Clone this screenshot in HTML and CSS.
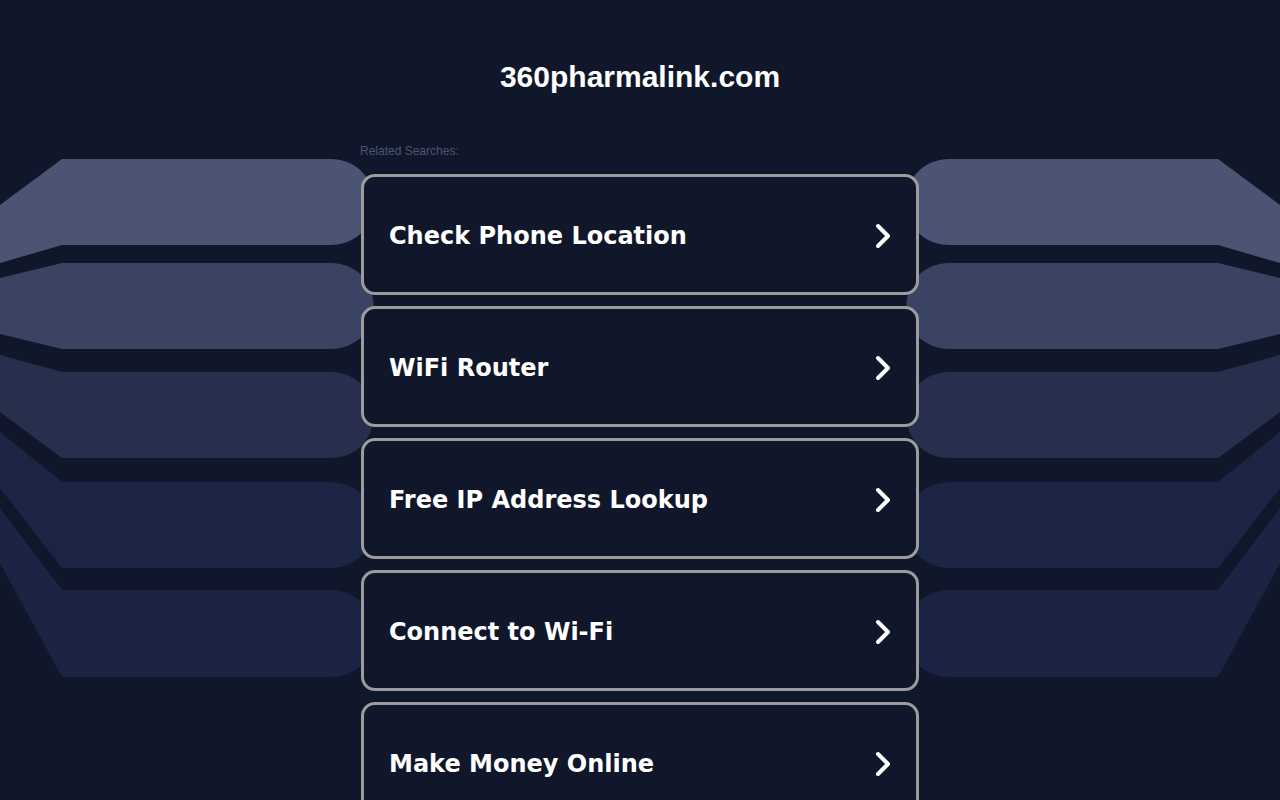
FILE: index.html
```html
<!DOCTYPE html>
<html lang="en">
<head>
<meta charset="utf-8">
<title>360pharmalink.com</title>
<link rel="stylesheet" href="styles.css">
</head>
<body>
<svg class="backdrop" viewBox="0 0 1280 800" width="1280" height="800" aria-hidden="true">
  <defs>
    <pattern id="dots" width="4" height="4" patternUnits="userSpaceOnUse">
      <rect x="1" y="1" width="1" height="1" fill="#232d52"/>
      <rect x="3" y="3" width="1" height="1" fill="#1a2140"/>
    </pattern>
    <g id="bands">
      <path fill="#4b5573" d="M0,205 L62,159 L330,159 C388,159 388,245 330,245 L62,245 L0,263 Z"/>
      <path fill="#3a4361" d="M0,278 L62,263 L330,263 C388,263 388,349 330,349 L62,349 L0,334 Z"/>
      <path fill="#272f4d" d="M0,355 L62,372 L330,372 C388,372 388,458 330,458 L62,458 L0,412 Z"/>
      <path fill="#1c2444" d="M0,432 L62,482 L330,482 C388,482 388,568 330,568 L62,568 L0,488 Z"/>
      <path fill="url(#dots)" d="M0,432 L62,482 L330,482 C388,482 388,568 330,568 L62,568 L0,488 Z"/>
      <path fill="#1b2343" d="M0,508 L62,590 L330,590 C388,590 388,677 330,677 L62,677 L0,563 Z"/>
      <path fill="url(#dots)" d="M0,508 L62,590 L330,590 C388,590 388,677 330,677 L62,677 L0,563 Z"/>
    </g>
  </defs>
  <use href="#bands"/>
  <use href="#bands" transform="translate(1280,0) scale(-1,1)"/>
</svg>
<div class="page">
  <header class="header">
    <h1 class="domain">360pharmalink.com</h1>
  </header>
  <main class="main">
    <div class="label">Related Searches:</div>
    <ul class="list">
      <li><a class="card" href="#"><span>Check Phone Location</span><svg class="chev" viewBox="0 0 16 26" width="16" height="26"><polyline points="3,3 13,13 3,23"/></svg></a></li>
      <li><a class="card" href="#"><span>WiFi Router</span><svg class="chev" viewBox="0 0 16 26" width="16" height="26"><polyline points="3,3 13,13 3,23"/></svg></a></li>
      <li><a class="card" href="#"><span>Free IP Address Lookup</span><svg class="chev" viewBox="0 0 16 26" width="16" height="26"><polyline points="3,3 13,13 3,23"/></svg></a></li>
      <li><a class="card" href="#"><span>Connect to Wi-Fi</span><svg class="chev" viewBox="0 0 16 26" width="16" height="26"><polyline points="3,3 13,13 3,23"/></svg></a></li>
      <li><a class="card" href="#"><span>Make Money Online</span><svg class="chev" viewBox="0 0 16 26" width="16" height="26"><polyline points="3,3 13,13 3,23"/></svg></a></li>
    </ul>
  </main>
</div>
</body>
</html>
```
FILE: styles.css
```css
html, body {
  margin: 0;
  padding: 0;
  height: 100%;
  overflow: hidden;
}
body {
  background: #11172b;
  font-family: "Liberation Sans", Arial, sans-serif;
  color: #fff;
}
.backdrop {
  position: absolute;
  left: 0;
  top: 0;
  z-index: 0;
  display: block;
}
.page {
  position: relative;
  z-index: 1;
  display: flex;
  flex-direction: column;
  align-items: center;
}
.header {
  padding-top: 60px;
  height: 84px;
}
.domain {
  margin: 0;
  font-size: 30px;
  line-height: 34px;
  font-weight: bold;
  color: #fff;
  text-align: center;
}
.main {
  width: 558px;
}
.label {
  font-size: 12px;
  line-height: 14px;
  color: #4b5473;
  margin-bottom: 16px;
  margin-left: -1px;
}
.list {
  list-style: none;
  margin: 0;
  padding: 0;
  display: flex;
  flex-direction: column;
  gap: 11px;
}
.card {
  box-sizing: border-box;
  height: 121px;
  display: flex;
  align-items: center;
  justify-content: space-between;
  padding: 3px 25px 0 25px;
  border: 3px solid #9c9c9c;
  border-radius: 14px;
  background: #11172b;
  color: #fff;
  text-decoration: none;
  font-family: "DejaVu Sans", Verdana, sans-serif;
  font-weight: bold;
  font-size: 24px;
}
.chev {
  display: block;
  fill: none;
  stroke: #fff;
  stroke-width: 4;
  stroke-linecap: round;
  stroke-linejoin: round;
}
```
